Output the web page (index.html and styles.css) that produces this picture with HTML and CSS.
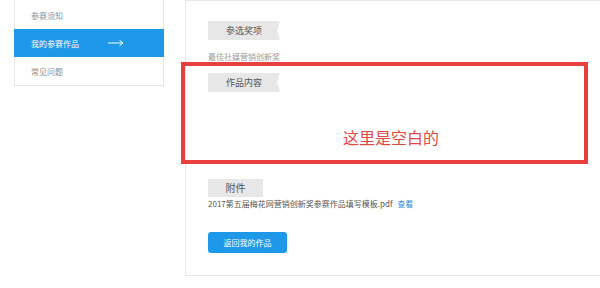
FILE: index.html
```html
<!DOCTYPE html>
<html lang="zh-CN">
<head>
<meta charset="utf-8">
<title>我的参赛作品</title>
<link rel="stylesheet" href="styles.css">
</head>
<body>
<div class="page">
  <aside class="sidebar">
    <a class="side-item">参赛须知</a>
    <a class="side-item active">我的参赛作品
      <svg class="arrow" width="16" height="8" viewBox="0 0 16 8"><path d="M0 4H15M11.5 1.2L15 4L11.5 6.8" fill="none" stroke="#fff" stroke-width="1"/></svg>
    </a>
    <a class="side-item">常见问题</a>
  </aside>
  <main class="panel">
    <div class="tag">参选奖项</div>
    <p class="award">最佳社媒营销创新奖</p>
    <div class="tag tag-second">作品内容</div>
    <p class="blank">这里是空白的</p>
    <div class="tag tag-small">附件</div>
    <p class="file">2017第五届梅花网营销创新奖参赛作品填写模板.pdf <a class="view">查看</a></p>
    <button class="back-btn">返回我的作品</button>
  </main>
</div>
<div class="highlight"></div>
</body>
</html>
```

FILE: styles.css
```css
html, body {
  margin: 0;
  padding: 0;
  background: #fff;
  overflow: hidden;
  font-family: "Noto Sans CJK SC", "Noto Sans", sans-serif;
}
body {
  position: relative;
  width: 600px;
  height: 288px;
}
.page {
  display: flex;
  align-items: flex-start;
  padding-left: 14px;
  gap: 21px;
}
.sidebar {
  width: 150px;
  flex: none;
  box-sizing: border-box;
  border: 1px solid #e6e6e6;
  border-top: none;
  padding-top: 1px;
  display: flex;
  flex-direction: column;
}
.side-item {
  height: 28px;
  display: flex;
  align-items: center;
  padding-left: 16px;
  font-size: 8px;
  color: #909090;
}
.side-item.active {
  background: #1e98e8;
  color: #fff;
  margin: 0 -1px;
  padding-left: 17px;
}
.arrow {
  margin-left: 29px;
}
.panel {
  flex: 1;
  min-width: 0;
  border: 1px solid #e8e8e8;
  border-right: none;
  padding: 20px 0 22px 22px;
  display: flex;
  flex-direction: column;
  align-items: flex-start;
}
.tag {
  width: 72px;
  height: 19px;
  line-height: 19px;
  background: #e7e7e7;
  color: #555;
  font-size: 9px;
  text-align: center;
  clip-path: polygon(0 0, 100% 0, calc(100% - 3px) 50%, 100% 100%, 0 100%);
}
.tag-second {
  margin-top: 10px;
}
.tag-small {
  width: 55px;
  height: 18px;
  line-height: 18px;
  font-size: 10px;
  margin-top: 32px;
  clip-path: none;
}
.award {
  margin: 11px 0 0;
  font-size: 8px;
  line-height: 12px;
  color: #9a9a9a;
}
.blank {
  margin: 35px 0 0;
  padding-left: 135px;
  font-size: 16px;
  line-height: 20px;
  color: #dc4a44;
}
.file {
  margin: 1px 0 0;
  font-size: 8px;
  line-height: 12px;
  color: #555;
}
.view {
  color: #2a8fdc;
  margin-left: 3px;
}
.back-btn {
  margin-top: 22px;
  width: 79px;
  height: 21px;
  border: none;
  border-radius: 3px;
  background: #1e98e8;
  color: #fff;
  font-family: inherit;
  font-size: 8px;
  padding: 0;
}
.highlight {
  position: absolute;
  left: 181px;
  top: 62px;
  width: 407px;
  height: 102px;
  box-sizing: border-box;
  border: 4px solid #e8403e;
}
```
